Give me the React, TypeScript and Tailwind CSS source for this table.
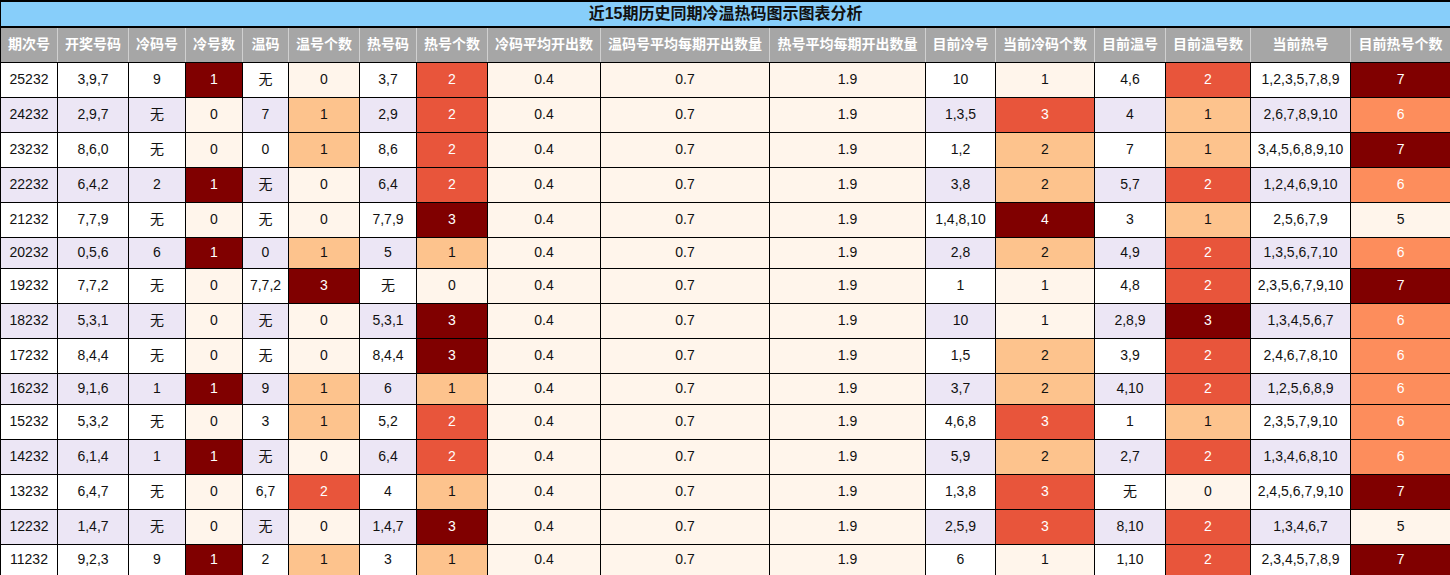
import React from "react";

type Row = (string | number)[];

const headers = [
  "期次号",
  "开奖号码",
  "冷码号",
  "冷号数",
  "温码",
  "温号个数",
  "热号码",
  "热号个数",
  "冷码平均开出数",
  "温码号平均每期开出数量",
  "热号平均每期开出数量",
  "目前冷号",
  "当前冷码个数",
  "目前温号",
  "目前温号数",
  "当前热号",
  "目前热号个数",
];

const widths = [57, 71, 57, 57, 46, 71, 57, 71, 113, 169, 156, 70, 99, 71, 85, 100, 100];

const data: Row[] = [
  ["25232", "3,9,7", "9", 1, "无", 0, "3,7", 2, "10", 1, "4,6", 2, "1,2,3,5,7,8,9", 7],
  ["24232", "2,9,7", "无", 0, "7", 1, "2,9", 2, "1,3,5", 3, "4", 1, "2,6,7,8,9,10", 6],
  ["23232", "8,6,0", "无", 0, "0", 1, "8,6", 2, "1,2", 2, "7", 1, "3,4,5,6,8,9,10", 7],
  ["22232", "6,4,2", "2", 1, "无", 0, "6,4", 2, "3,8", 2, "5,7", 2, "1,2,4,6,9,10", 6],
  ["21232", "7,7,9", "无", 0, "无", 0, "7,7,9", 3, "1,4,8,10", 4, "3", 1, "2,5,6,7,9", 5],
  ["20232", "0,5,6", "6", 1, "0", 1, "5", 1, "2,8", 2, "4,9", 2, "1,3,5,6,7,10", 6],
  ["19232", "7,7,2", "无", 0, "7,7,2", 3, "无", 0, "1", 1, "4,8", 2, "2,3,5,6,7,9,10", 7],
  ["18232", "5,3,1", "无", 0, "无", 0, "5,3,1", 3, "10", 1, "2,8,9", 3, "1,3,4,5,6,7", 6],
  ["17232", "8,4,4", "无", 0, "无", 0, "8,4,4", 3, "1,5", 2, "3,9", 2, "2,4,6,7,8,10", 6],
  ["16232", "9,1,6", "1", 1, "9", 1, "6", 1, "3,7", 2, "4,10", 2, "1,2,5,6,8,9", 6],
  ["15232", "5,3,2", "无", 0, "3", 1, "5,2", 2, "4,6,8", 3, "1", 1, "2,3,5,7,9,10", 6],
  ["14232", "6,1,4", "1", 1, "无", 0, "6,4", 2, "5,9", 2, "2,7", 2, "1,3,4,6,8,10", 6],
  ["13232", "6,4,7", "无", 0, "6,7", 2, "4", 1, "1,3,8", 3, "无", 0, "2,4,5,6,7,9,10", 7],
  ["12232", "1,4,7", "无", 0, "无", 0, "1,4,7", 3, "2,5,9", 3, "8,10", 2, "1,3,4,6,7", 5],
  ["11232", "9,2,3", "9", 1, "2", 1, "3", 1, "6", 1, "1,10", 2, "2,3,4,5,7,8,9", 7],
];

const CREAM = "bg-[#fff5eb] text-[#111]";
const LIGHT = "bg-[#fdc38d] text-[#111]";
const RED = "bg-[#e8553b] text-white";
const DARK = "bg-[#800000] text-white";
const ORANGE = "bg-[#fd8d5c] text-white";

const scale4 = [CREAM, LIGHT, RED, DARK];

function coldCls(v: number) {
  return v === 0 ? CREAM : DARK;
}
function curColdCls(v: number) {
  return scale4[Math.max(0, Math.min(3, v - 1))];
}
function curHotCls(v: number) {
  if (v <= 5) return CREAM;
  if (v === 6) return ORANGE;
  return DARK;
}

export default function App() {
  return (
    <div
      className="w-[1450px] h-[575px] overflow-hidden bg-white"
      style={{ fontFamily: '"Liberation Sans", "Noto Sans CJK SC", Arial, sans-serif' }}
    >
      <table className="w-[1450px] table-fixed border-collapse text-[14px] text-center">
        <colgroup>
          {widths.map((w, i) => (
            <col key={i} style={{ width: w }} />
          ))}
        </colgroup>
        <thead>
          <tr className="h-[26px]">
            <th
              colSpan={17}
              className="bg-[#87cefa] border-x border-y-2 border-black p-0 text-[16px] font-bold text-[#111] leading-[20px]"
            >
              近15期历史同期冷温热码图示图表分析
            </th>
          </tr>
          <tr className="h-[35px]">
            {headers.map((h, i) => (
              <th
                key={i}
                className="bg-[#a6a6a6] border border-[#d0d0d0] border-b-black first:border-l-black last:border-r-black p-0 font-bold text-white whitespace-nowrap"
              >
                {h}
              </th>
            ))}
          </tr>
        </thead>
        <tbody>
          {data.map((r, ri) => {
            const tall = r.some((c) => c === "无");
            const base = ri % 2 === 1 ? "bg-[#ece6f5] text-[#111]" : "bg-white text-[#111]";
            const cells: { v: string | number; cls: string }[] = [
              { v: r[0], cls: base },
              { v: r[1], cls: base },
              { v: r[2], cls: base },
              { v: r[3], cls: coldCls(r[3] as number) },
              { v: r[4], cls: base },
              { v: r[5], cls: scale4[r[5] as number] },
              { v: r[6], cls: base },
              { v: r[7], cls: scale4[r[7] as number] },
              { v: "0.4", cls: CREAM },
              { v: "0.7", cls: CREAM },
              { v: "1.9", cls: CREAM },
              { v: r[8], cls: base },
              { v: r[9], cls: curColdCls(r[9] as number) },
              { v: r[10], cls: base },
              { v: r[11], cls: scale4[r[11] as number] },
              { v: r[12], cls: base },
              { v: r[13], cls: curHotCls(r[13] as number) },
            ];
            return (
              <tr key={ri} className={tall ? "h-[35px]" : "h-[31px]"}>
                {cells.map((c, ci) => (
                  <td key={ci} className={`border border-black p-0 whitespace-nowrap ${c.cls}`}>
                    {c.v}
                  </td>
                ))}
              </tr>
            );
          })}
        </tbody>
      </table>
    </div>
  );
}
